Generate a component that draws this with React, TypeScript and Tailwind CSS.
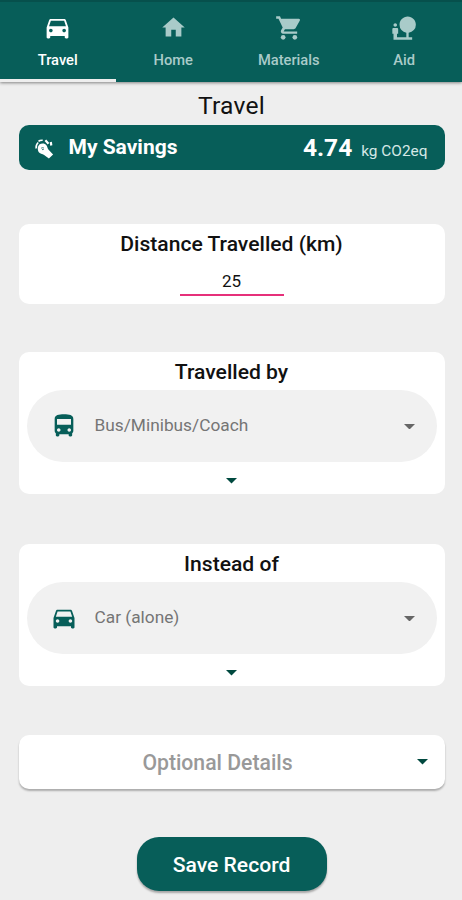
/**
 * Travel screen: tab bar, savings banner and the trip form
 */
import { useState } from 'react';
import type { ComponentType, ReactNode } from 'react';
import { MdDirectionsBus, MdDirectionsCar, MdHome, MdNaturePeople } from 'react-icons/md';

type Icon = ComponentType<{ className?: string }>;

// cart with a solid basket
function CartIcon({ className }: { className?: string }) {
  return (
    <svg viewBox="0 0 24 24" className={className} fill="currentColor">
      <path d="M1 2v2h2l3.6 7.6-1.4 2.4c-.7 1.4.3 3 1.8 3h12v-2H7.4l1.1-2h7.5c.7 0 1.4-.4 1.7-1l3.6-6.5c.4-.7-.1-1.5-.9-1.5H5.2l-.9-2z" />
      <circle cx="7" cy="20" r="2" />
      <circle cx="17" cy="20" r="2" />
    </svg>
  );
}

const TABS: { label: string; Icon: Icon; size: string }[] = [
  { label: 'Travel', Icon: MdDirectionsCar, size: 'size-[29px]' },
  { label: 'Home', Icon: MdHome, size: 'size-[27px]' },
  { label: 'Materials', Icon: CartIcon, size: 'size-[28px]' },
  { label: 'Aid', Icon: MdNaturePeople, size: 'size-[28px]' },
];

function Caret({ className }: { className: string }) {
  return (
    <svg viewBox="0 0 10 5" className={className} fill="currentColor">
      <path d="M0 0h10L5 5z" />
    </svg>
  );
}

function SavingsIcon() {
  return (
    <svg viewBox="0 0 22 24" className="mt-[2px] h-6 w-[22px]" fill="none" stroke="currentColor">
      <path
        d="M5.3 7.6C7.6 5.8 10.9 6 12.4 8.3c.9 1.4 1.1 3.1 2.2 4.500l4.500 4.600-4.200 4-4.800-3.500c-1.600-1-4.400-1.200-5.500-3-1.300-2.100-1.200-5.300.700-7.300z"
        fill="currentColor"
        stroke="none"
      />
      <path d="M7 11.500c.6-.8 1.800-1 2.900-.5M8 12.700l1.800-.4" stroke="#075e59" strokeWidth="0.8" />
      <path d="M2.200 11.500c-.4-2.500.4-4.600 2-6M4.500 4.400c1-1 2.600-1.300 4.200-1.200" strokeWidth="1.600" />
      <path d="M11.400 3.200l3.100 3.500M16.800 5l.5 3.500" strokeWidth="2.200" />
    </svg>
  );
}

function Card({ title, className, children }: { title: string; className: string; children: ReactNode }) {
  return (
    <section className={`flex flex-col items-center rounded-[10px] bg-white ${className}`}>
      <h2 className="mt-[7px] text-[21.1px] leading-[26px] font-medium">{title}</h2>
      {children}
    </section>
  );
}

function SelectCard({ title, value, Icon, className }: {
  title: string;
  value: string;
  Icon: Icon;
  className: string;
}) {
  return (
    <Card title={title} className={`h-[142px] ${className}`}>
      <button className="mt-[5px] flex h-[72px] w-[410px] items-center rounded-full bg-[#f1f1f1] pr-[22px] pl-[23px]">
        <Icon className="size-[28px] text-[#075e59]" />
        <span className="ml-[17px] flex-1 text-left text-[17.3px] text-[#757575]">{value}</span>
        <Caret className="mt-[1px] h-[5.5px] w-[11px] text-[#666]" />
      </button>
      <Caret className="mt-[16px] h-[5.5px] w-[11px] text-[#00493f]" />
    </Card>
  );
}

export default function App() {
  const [distance, setDistance] = useState('25');

  return (
    <div className="flex h-[900px] w-[462px] flex-col overflow-hidden bg-[#eee] font-[Roboto,'Liberation_Sans',sans-serif] text-[#111]">
      {/* Tab bar */}
      <nav className="flex h-[82px] shrink-0 border-t-2 border-[#06504c] bg-[#075e59] shadow-[0_1px_3px_rgba(0,0,0,0.45)]">
        {TABS.map(({ label, Icon, size }, i) => (
          <button
            key={label}
            className={`flex flex-1 flex-col items-center border-b-[3px] pt-[11px] ${
              i === 0 ? 'border-[#eee] text-white' : 'border-transparent text-[#a9cbc9]'
            }`}
          >
            <span className="flex h-[29px] items-center">
              <Icon className={size} />
            </span>
            <span className="mt-[8px] text-[14.7px] leading-[20px] font-medium">{label}</span>
          </button>
        ))}
      </nav>

      <main className="flex flex-col pr-[17.5px] pl-[18.5px]">
        <h1 className="mt-[8px] text-center text-[24.6px] leading-[32px] tracking-[0.2px]">Travel</h1>

        {/* Savings banner */}
        <div className="mt-[3px] flex h-[45px] items-center rounded-[10px] bg-[#075e59] pr-[17px] pl-[15px] text-white">
          <SavingsIcon />
          <span className="ml-[13px] flex-1 text-[21px] font-bold">My Savings</span>
          <span className="mt-[2px] text-[24.5px] font-bold">4.74</span>
          <span className="mt-[9px] ml-[9px] text-[15.4px] text-[#d5e8e6]">kg CO2eq</span>
        </div>

        <Card title="Distance Travelled (km)" className="mt-[54px] h-[80px]">
          <input
            value={distance}
            onChange={(e) => setDistance(e.target.value)}
            className="mt-[9px] h-[30px] w-[104px] border-b-2 border-[#e6307a] pt-[2px] text-center text-[17px] outline-none"
          />
        </Card>

        <SelectCard title="Travelled by" value="Bus/Minibus/Coach" Icon={MdDirectionsBus} className="mt-[48px]" />
        <SelectCard title="Instead of" value="Car (alone)" Icon={MdDirectionsCar} className="mt-[50px]" />

        <button className="mt-[49px] flex h-[54px] items-center rounded-[10px] bg-white pr-[17px] text-[21.2px] font-medium text-[#999] shadow-[0_2px_2px_rgba(0,0,0,0.28)]">
          <span className="flex-1 pt-[1px]">Optional Details</span>
          <Caret className="h-[5.5px] w-[11px] text-[#00493f]" />
        </button>

        <button className="mt-[48px] h-[54px] w-[190px] self-center rounded-[22px] bg-[#075e59] pt-[2px] text-[21.1px] font-medium text-white shadow-[0_2px_2px_rgba(0,0,0,0.3)]">
          Save Record
        </button>
      </main>
    </div>
  );
}
